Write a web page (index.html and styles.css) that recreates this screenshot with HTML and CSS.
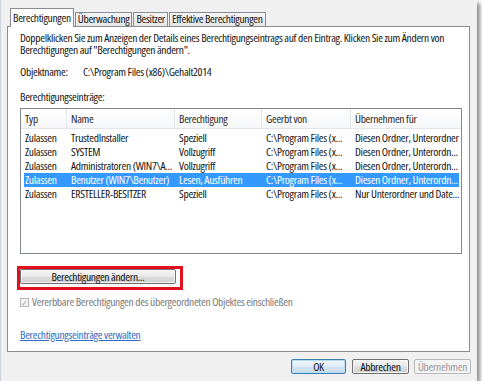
FILE: index.html
```html
<!DOCTYPE html>
<html lang="de">
<head>
<meta charset="utf-8">
<title>Berechtigungen</title>
<link rel="stylesheet" href="styles.css">
</head>
<body>
<div class="dialog">
  <div class="tabs">
    <div class="tab active">Berechtigungen</div>
    <div class="tab">Überwachung</div>
    <div class="tab">Besitzer</div>
    <div class="tab">Effektive Berechtigungen</div>
  </div>
  <div class="panel">
    <p class="intro">Doppelklicken Sie zum Anzeigen der Details eines Berechtigungseintrags auf den Eintrag. Klicken Sie zum Ändern von Berechtigungen auf "Berechtigungen ändern".</p>
    <div class="objrow"><span class="lbl">Objektname:</span><span>C:\Program Files (x86)\Gehalt2014</span></div>
    <div class="listlabel">Berechtigungseinträge:</div>
    <div class="list">
      <div class="row head"><span>Typ</span><span>Name</span><span>Berechtigung</span><span>Geerbt von</span><span>Übernehmen für</span></div>
      <div class="row"><span>Zulassen</span><span>TrustedInstaller</span><span>Speziell</span><span>C:\Program Files (x...</span><span>Diesen Ordner, Unterordner</span></div>
      <div class="row"><span>Zulassen</span><span>SYSTEM</span><span>Vollzugriff</span><span>C:\Program Files (x...</span><span>Diesen Ordner, Unterordn...</span></div>
      <div class="row"><span>Zulassen</span><span>Administratoren (WIN7\A...</span><span>Vollzugriff</span><span>C:\Program Files (x...</span><span>Diesen Ordner, Unterordn...</span></div>
      <div class="row selected"><span>Zulassen</span><span>Benutzer (WIN7\Benutzer)</span><span>Lesen, Ausführen</span><span>C:\Program Files (x...</span><span>Diesen Ordner, Unterordn...</span></div>
      <div class="row"><span>Zulassen</span><span>ERSTELLER-BESITZER</span><span>Speziell</span><span>C:\Program Files (x...</span><span>Nur Unterordner und Date...</span></div>
    </div>
    <div class="highlight"><button class="btn wide">Berechtigungen ändern...</button></div>
    <div class="check"><span class="box">✓</span><span>Vererbbare Berechtigungen des übergeordneten Objektes einschließen</span></div>
    <a class="link" href="#">Berechtigungseinträge verwalten</a>
  </div>
  <div class="footer">
    <button class="btn default">OK</button>
    <button class="btn">Abbrechen</button>
    <button class="btn disabled">Übernehmen</button>
  </div>
</div>
</body>
</html>
```
FILE: styles.css
```css
* { box-sizing: border-box; }
html, body { margin: 0; padding: 0; background: #ffffff; }
body {
  font-family: "Open Sans", "Liberation Sans", Arial, sans-serif;
  font-stretch: 75%;
  font-size: 11.5px;
  letter-spacing: -0.3px;
  color: #141414;
}
.dialog {
  width: 477px;
  height: 381px;
  background: #f0f0f0;
  border-left: 1px solid #c9d1da;
  padding: 8px 0 0 6px;
  box-shadow: 3px 3px 4px rgba(0,0,0,0.45);
}
.tabs {
  display: flex;
  align-items: flex-end;
  height: 18px;
  padding-left: 3px;
}
.tab {
  height: 14px;
  line-height: 12px;
  padding: 0 2px;
  border: 1px solid #898c95;
  border-bottom: none;
  background: linear-gradient(#f4f4f4, #e6e6e6);
  margin-right: 1px;
  white-space: nowrap;
}
.tab.active {
  height: 19px;
  line-height: 17px;
  background: #ffffff;
  margin-bottom: -1px;
  position: relative;
  z-index: 1;
  padding: 0 2px;
}
.panel {
  width: 463px;
  height: 326px;
  border: 1px solid #898c95;
  background: #ffffff;
  padding: 0 8px 0 12px;
  display: flex;
  flex-direction: column;
  align-items: flex-start;
}
.intro {
  margin: 5px 0 0 0;
  line-height: 12px;
  width: 436px;
}
.objrow {
  margin-top: 10px;
  line-height: 12px;
  display: flex;
}
.lbl { width: 63px; }
.listlabel {
  margin-top: 13px;
  line-height: 12px;
}
.list {
  margin-top: 5px;
  width: 442px;
  height: 146px;
  border: 1px solid #828790;
  flex-shrink: 0;
}
.row {
  display: grid;
  grid-template-columns: 46px 108px 87px 89px 110px;
  height: 14px;
  line-height: 14px;
}
.row span {
  padding-left: 4px;
  white-space: nowrap;
  overflow: hidden;
}
.row.head {
  height: 20px;
  line-height: 20px;
  background: linear-gradient(#ffffff, #f6f7f9);
  border-bottom: 1px solid #e3e5e8;
  margin-bottom: 2px;
  color: #2a2a2a;
}
.row.head span { border-right: 1px solid #e4e6ea; }
.row.head span:last-child { border-right: none; }
.row.selected {
  background: #3399ff;
  color: #ffffff;
  margin: 0 2px 0 3px;
  grid-template-columns: 43px 108px 87px 89px 108px;
}
.row.selected span:first-child { padding-left: 1px; }
.highlight {
  margin: 12px 0 0 -3px;
  border: 3px solid #e2101c;
  padding: 0 4px 3px 0;
}
.btn {
  font: inherit;
  letter-spacing: -0.3px;
  color: #141414;
  height: 15px;
  padding: 0;
  line-height: 13px;
  border: 1px solid #707070;
  border-radius: 2px;
  background: linear-gradient(#f3f3f3, #ebebeb 48%, #dddddd 52%, #cfcfcf);
  box-shadow: inset 0 0 0 1px rgba(255,255,255,0.7);
}
.btn.wide { width: 156px; display: block; }
.check {
  margin-top: 6px;
  display: flex;
  align-items: center;
  line-height: 12px;
  color: #7a7a7a;
}
.box {
  width: 9px;
  height: 9px;
  border: 1px solid #b6b6b6;
  background: #f4f4f4;
  font-size: 8px;
  line-height: 7px;
  text-align: center;
  color: #9a9a9a;
  margin-right: 3px;
}
.link {
  margin-top: 21px;
  line-height: 12px;
  color: #2f6bc4;
  text-decoration: underline;
}
.footer {
  display: flex;
  justify-content: flex-end;
  padding: 7px 6px 0 0;
  gap: 5px;
}
.footer .btn { width: 57px; }
.footer .btn.default {
  width: 55px;
  margin-right: 1px;
  border-color: #3c7fb1;
  background: linear-gradient(#eef5fa, #e3eef6 48%, #d3e4f0 52%, #c6dbea);
  box-shadow: inset 0 0 0 1px #b9dcf3;
}
.footer .btn.disabled {
  color: #9a9a9a;
  border-color: #b5b9bc;
  background: #f4f4f4;
  box-shadow: none;
}
```
